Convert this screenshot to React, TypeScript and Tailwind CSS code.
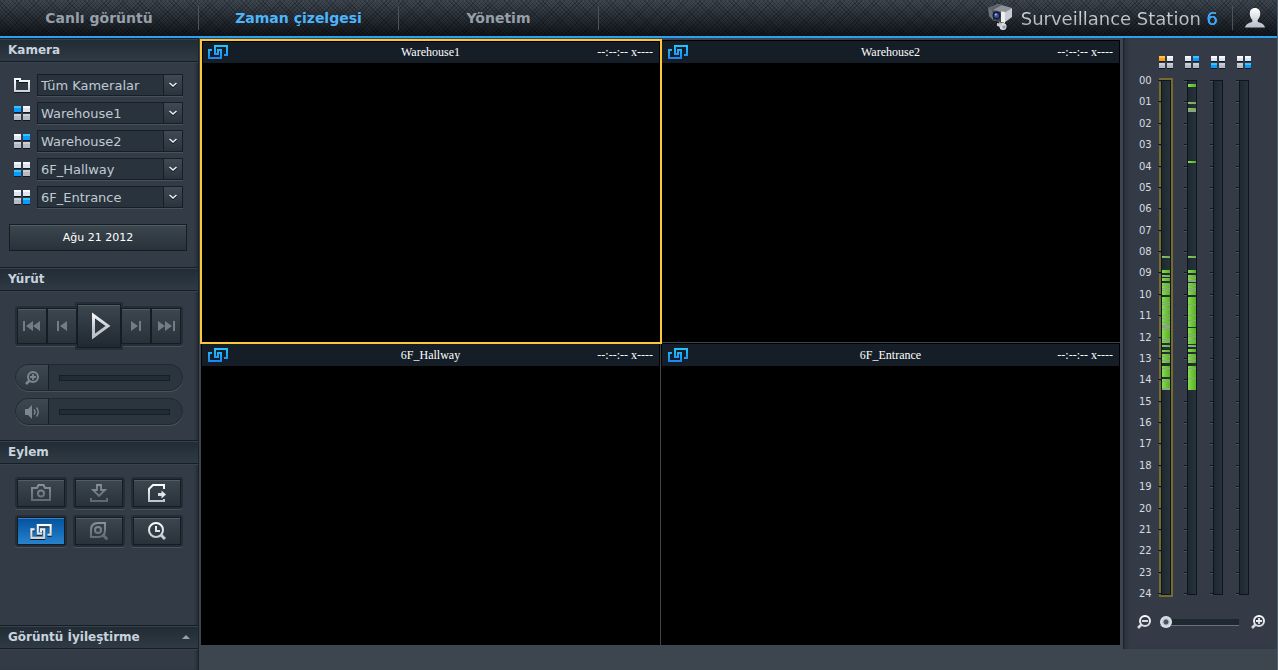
import React, { useState } from 'react';
import clsx from 'clsx';

type Corner = 'tl' | 'tr' | 'bl' | 'br';
type Tone = 'g' | 'x';
// start, length, tone: one day is DAY_LENGTH units long
type Segment = [number, number, Tone];

const DAY_LENGTH = 514;

const tabs = ['Canlı görüntü', 'Zaman çizelgesi', 'Yönetim'];

const cameras: { name: string; corner: Corner }[] = [
  { name: 'Warehouse1', corner: 'tl' },
  { name: 'Warehouse2', corner: 'tr' },
  { name: '6F_Hallway', corner: 'bl' },
  { name: '6F_Entrance', corner: 'br' },
];

const hours = Array.from({ length: 25 }, (_, i) => String(i).padStart(2, '0'));

const recordings: Segment[][] = [
  [
    [175, 1, 'g'], [176, 1, 'x'], [189, 3, 'g'], [194, 1, 'g'], [195, 1, 'x'], [197, 3, 'g'],
    [202, 12, 'g'], [204, 1, 'x'], [207, 1, 'x'], [209, 1, 'x'],
    [216, 47, 'g'], [221, 1, 'x'], [223, 1, 'x'], [228, 1, 'x'], [234, 1, 'x'], [237, 1, 'x'], [241, 1, 'x'],
    [244, 3, 'x'], [248, 1, 'x'], [259, 1, 'x'], [261, 1, 'x'],
    [265, 1, 'g'], [266, 1, 'x'], [270, 2, 'g'], [274, 9, 'g'], [276, 1, 'x'], [280, 1, 'x'],
    [286, 11, 'g'], [288, 1, 'x'], [299, 11, 'g'], [301, 1, 'x'], [308, 2, 'x'],
  ],
  [
    [3, 3, 'g'], [21, 1, 'g'], [22, 1, 'x'], [27, 1, 'g'], [28, 3, 'x'], [80, 2, 'g'],
    [175, 1, 'g'], [176, 1, 'x'], [189, 3, 'g'], [194, 7, 'g'], [196, 1, 'x'], [199, 2, 'x'],
    [202, 12, 'g'], [204, 1, 'x'], [207, 1, 'x'], [209, 1, 'x'],
    [216, 30, 'g'], [223, 1, 'x'], [234, 1, 'x'], [239, 1, 'x'],
    [247, 17, 'g'], [253, 1, 'x'], [255, 1, 'x'], [261, 1, 'x'],
    [265, 1, 'g'], [266, 1, 'x'], [269, 3, 'g'], [274, 9, 'g'], [276, 1, 'x'], [280, 1, 'x'],
    [286, 24, 'g'], [288, 1, 'x'], [298, 1, 'x'],
  ],
  [],
  [],
];

const Gradients: React.FC = () => (
  <svg className="absolute h-0 w-0" aria-hidden="true">
    <defs>
      <linearGradient id="silver" gradientUnits="userSpaceOnUse" x1="0" y1="0" x2="0" y2="18">
        <stop offset="0" stopColor="#ffffff" />
        <stop offset="1" stopColor="#bcc3cd" />
      </linearGradient>
      <linearGradient id="dim" gradientUnits="userSpaceOnUse" x1="0" y1="0" x2="0" y2="18">
        <stop offset="0" stopColor="#8a939c" />
        <stop offset="1" stopColor="#5d6670" />
      </linearGradient>
      <linearGradient id="azure" gradientUnits="userSpaceOnUse" x1="0" y1="0" x2="0" y2="14">
        <stop offset="0" stopColor="#1fc8ff" />
        <stop offset="1" stopColor="#1b84f2" />
      </linearGradient>
    </defs>
  </svg>
);

const QuadIcon: React.FC<{ corner: Corner; small?: boolean; active?: boolean }> = ({ corner, small, active }) => {
  const w = small ? 6 : 7;
  const h = small ? 5 : 6;
  const dx = small ? 8 : 9;
  const dy = small ? 7 : 8;
  const cells: [Corner, number, number][] = [
    ['tl', 0, 0],
    ['tr', dx, 0],
    ['bl', 0, dy],
    ['br', dx, dy],
  ];
  const hot = active ? '#ff9d0a' : '#0a9bff';
  const hotTop = active ? '#ffc24a' : '#35c4ff';
  return (
    <svg
      className={small ? 'h-[13px] w-[14px]' : 'h-[15px] w-4'}
      viewBox={small ? '0 0 14 13' : '0 0 16 15'}
      shapeRendering="crispEdges"
      aria-hidden="true"
    >
      {cells.map(([id, x, y]) => (
        <g key={id}>
          <rect x={x} y={y + 1} width={w} height={h} fill="#12181f" />
          <rect x={x} y={y} width={w} height={h} fill={id === corner ? hot : y ? '#b4bbc5' : '#dfe5f0'} />
          <rect x={x} y={y} width={w} height="2" fill={id === corner ? hotTop : y ? '#c9ced6' : '#f6f9ff'} />
        </g>
      ))}
    </svg>
  );
};

const LinkIcon: React.FC<{ stroke: string; className?: string }> = ({ stroke, className }) => (
  <svg className={className} viewBox="0 0 20 14" fill="none" stroke={stroke} strokeWidth="2" aria-hidden="true">
    <path d="M4 5H1v8h12V5h-3v3" />
    <path d="M16 10h3V1H7v8h4" />
  </svg>
);

const MagnifierIcon: React.FC<{ plus?: boolean; stroke: string; className?: string }> = ({ plus, stroke, className }) => (
  <svg className={className} viewBox="0 0 14 14" fill="none" stroke={stroke} strokeWidth="2" aria-hidden="true">
    <circle cx="8" cy="6" r="5" />
    <path d="M4.5 9.5L1 13" strokeWidth="2.6" />
    <path d={plus ? 'M5 6h6M8 3v6' : 'M5 6h6'} strokeWidth="1.8" />
  </svg>
);

const Logo: React.FC = () => (
  <svg className="h-7 w-7" viewBox="0 0 28 28" aria-hidden="true">
    <path d="M1 4l10-4 14 4-7 5z" fill="#8d9299" />
    <path d="M1 4l10-4 4 1-9 5z" fill="#5e646b" />
    <path d="M1 4l5 2v10l-4-4z" fill="#6b7178" />
    <path d="M17 9l8-5v9l-8 6z" fill="#c9cdd2" />
    <path d="M5 6l13 2v11L6 16z" fill="#eceef0" />
    <path d="M5 6l9 1.500v10.800L6 16z" fill="#40454d" />
    <circle cx="9.500" cy="11.500" r="4" fill="#15192b" />
    <circle cx="9.500" cy="11.500" r="2.500" fill="#3350a8" />
    <circle cx="8.800" cy="10.600" r="1" fill="#a9c0ff" />
    <path d="M12 18l5 1v3l-5-1z" fill="#a0a5ab" />
    <circle cx="16" cy="22.500" r="3.500" fill="#dde0e3" />
    <circle cx="17" cy="23" r="1.800" fill="#9ca1a8" />
    <path d="M10 19l5 1-1 3-4-1z" fill="#c9cdd2" />
  </svg>
);

const SectionTitle: React.FC<{ children: React.ReactNode }> = ({ children }) => (
  <h2 className="flex h-6 shrink-0 items-center justify-between border-y border-[#151e27] bg-linear-to-b from-[#212b34] to-[#303a44] px-2 text-[12px] font-bold text-[#c8d3de] shadow-[inset_0_1px_0_#38424c,0_1px_0_#39434d]">
    {children}
  </h2>
);

const Dropdown: React.FC<{ label: string; options: string[]; initial: string }> = ({ label, options, initial }) => {
  const [value, setValue] = useState(initial);
  return (
    <div className="relative flex-1">
      <select
        aria-label={label}
        value={value}
        onChange={(e) => setValue(e.target.value)}
        className="block h-[22px] w-full appearance-none border border-[#161f28] bg-[#29333d] pl-[3px] pr-5 pt-px text-[13px] text-[#c0c9d2] shadow-[0_1px_0_#48525b]"
      >
        {options.map((option) => (
          <option key={option}>{option}</option>
        ))}
      </select>
      <span className="pointer-events-none absolute inset-y-0 right-0 flex w-5 items-center justify-center border border-[#161f28] bg-linear-to-b from-[#404a54] to-[#2a343d]">
        <svg className="h-[6px] w-2" viewBox="0 0 8 6" fill="none" aria-hidden="true">
          <path d="M0.500 2l3.500 3 3.500-3" stroke="#10161c" strokeWidth="1.500" />
          <path d="M0.500 1l3.500 3 3.500-3" stroke="#e8eef4" strokeWidth="1.500" />
        </svg>
      </span>
    </div>
  );
};

const raised = 'border border-[#141c24] bg-linear-to-b from-[#3c464f] to-[#29323b] shadow-[inset_0_1px_0_#535d66]';

const StepButton: React.FC<{ label: string; children: React.ReactNode }> = ({ label, children }) => (
  <button aria-label={label} className={clsx(raised, 'relative z-10 flex h-9 w-[30px] items-center justify-center')}>
    <svg className="h-3 w-[18px]" viewBox="0 0 18 12" fill="#737c85" aria-hidden="true">
      {children}
    </svg>
  </button>
);

const PillSlider: React.FC<{ label: string; icon: React.ReactNode }> = ({ label, icon }) => (
  <label className="flex h-[27px] items-center overflow-hidden rounded-full border border-[#1f2830] bg-[#2b353e] shadow-[0_1px_0_#48525b]">
    <span className="flex h-full w-[33px] items-center justify-center border-r border-[#161f28] bg-linear-to-b from-[#3e4851] to-[#2d3740]">
      {icon}
    </span>
    <input
      type="range"
      aria-label={label}
      disabled
      className="ml-[10px] mr-3 h-[6px] min-w-0 flex-1 appearance-none border border-[#161f28] bg-[#222c35] [&::-webkit-slider-thumb]:appearance-none"
    />
  </label>
);

const ActionButton: React.FC<{ label: string; active?: boolean; children: React.ReactNode }> = ({ label, active, children }) => (
  <div className="rounded-[3px] bg-[#252e37] p-[2px] shadow-[0_1px_0_#48525b]">
    <button
      aria-label={label}
      className={clsx(
        'flex h-7 w-full items-center justify-center border border-[#141c24]',
        active
          ? 'bg-linear-to-b from-[#04519d] to-[#2683cc] shadow-[inset_0_1px_0_#3b7fc0]'
          : 'bg-linear-to-b from-[#3c464f] to-[#29323b] shadow-[inset_0_1px_0_#535d66]'
      )}
    >
      {children}
    </button>
  </div>
);

const VideoTile: React.FC<{ name: string; selected: boolean; onSelect: () => void }> = ({ name, selected, onSelect }) => (
  <section onClick={onSelect} className="relative border border-black bg-black">
    <header className="grid h-[22px] grid-cols-3 items-center bg-[#151e27] px-[6px] font-['Liberation_Serif',serif] text-[12px] text-white">
      <LinkIcon stroke="url(#azure)" className="h-[14px] w-5" />
      <span className="text-center">{name}</span>
      <span className="text-right">--:--:-- x----</span>
    </header>
    {selected && (
      <div className="pointer-events-none absolute -bottom-[3px] -left-[2px] -right-[3px] -top-[2px] z-10 border-2 border-[#fcc83a] shadow-[inset_0_0_0_1px_#000]" />
    )}
  </section>
);

const Track: React.FC<{ segments: Segment[]; selected: boolean }> = ({ segments, selected }) => (
  <div className={clsx('relative w-[14px] border-2', selected ? 'border-[#756b2b]' : 'border-transparent')}>
    <div className="relative h-full border border-[#0d151d] bg-linear-to-r from-[#1d2830] to-[#28323c]">
      {segments.map(([start, length, tone], i) => (
        <div
          key={i}
          className={clsx(
            'absolute inset-x-0',
            tone === 'g' ? 'bg-linear-to-r from-[#84dc4e] to-[#5aae22]' : 'bg-[#8ba486]'
          )}
          style={{ top: `${(start / DAY_LENGTH) * 100}%`, height: `${(length / DAY_LENGTH) * 100}%` }}
        />
      ))}
    </div>
    <div className="absolute inset-y-0 -left-[3px] flex flex-col justify-between">
      {hours.map((hour) => (
        <span key={hour} className="h-[2px] w-[3px] border-t border-[#0d151d] bg-[#4a545d]" />
      ))}
    </div>
  </div>
);

const App: React.FC = () => {
  const [tab, setTab] = useState('Zaman çizelgesi');
  const [selected, setSelected] = useState(0);
  const [zoom, setZoom] = useState(0);

  const cameraNames = cameras.map((camera) => camera.name);

  return (
    <div className="flex min-h-screen flex-col border-r border-[#536270] bg-[#3d464f] font-['DejaVu_Sans',Verdana,sans-serif] text-[#c0c9d2]">
      <Gradients />
      <header className="flex h-[38px] items-center border-b-2 border-[#2ba0ee] bg-[repeating-linear-gradient(45deg,rgba(0,0,0,0.22)_0_1px,transparent_1px_3px),repeating-linear-gradient(-45deg,rgba(0,0,0,0.22)_0_1px,transparent_1px_3px),linear-gradient(#414a54,#10151b)]">
        <nav className="flex flex-1">
          {tabs.map((name) => (
            <button
              key={name}
              onClick={() => setTab(name)}
              className={clsx(
                'h-6 w-[200px] border-r border-[#4b545d] text-[14px] font-bold first:w-[199px]',
                name === tab ? 'text-[#4db5fa]' : 'text-[#979fa9]'
              )}
            >
              {name}
            </button>
          ))}
        </nav>
        <Logo />
        <h1 className="ml-[6px] bg-linear-to-b from-[#e6eaee] to-[#9aa2ab] bg-clip-text text-[18px] text-transparent">
          Surveillance Station <span className="text-[#2ba6f7]">6</span>
        </h1>
        <button aria-label="Kullanıcı" className="ml-[14px] flex h-6 items-center border-l border-[#4b545d] pl-3 pr-3">
          <svg className="h-5 w-5" viewBox="0 0 20 20" fill="url(#silver)" aria-hidden="true">
            <path d="M10 0c3.400 0 5.200 2.300 5.200 5.400 0 2.800-1.200 5-2.500 6.300v2c2 1.200 6.800 1.800 7.300 5.800H0c.5-4 5.300-4.600 7.300-5.800v-2C6 10.400 4.800 8.200 4.800 5.400 4.800 2.300 6.600 0 10 0z" />
          </svg>
        </button>
      </header>

      <div className="flex flex-1">
        <aside className="flex w-[199px] shrink-0 flex-col border-r border-[#1a222a] bg-[#333c46] shadow-[inset_-3px_0_3px_-1px_#252e37]">
          <SectionTitle>Kamera</SectionTitle>
          <div className="pb-4 pl-[9px] pr-[11px] pt-3">
            <div className="flex flex-col gap-[6px] pl-[5px] pr-1">
              <div className="flex items-center gap-[7px]">
                <svg className="h-[15px] w-4" viewBox="0 0 16 15" fill="none" aria-hidden="true">
                  <path d="M1 14V2h5v2h9v10z" stroke="#10161c" strokeWidth="2" />
                  <path d="M1 13V1h5v2h9v10z" stroke="url(#silver)" strokeWidth="2" />
                </svg>
                <Dropdown label="Kamera grubu" options={['Tüm Kameralar']} initial="Tüm Kameralar" />
              </div>
              {cameras.map(({ name, corner }) => (
                <div key={name} className="flex items-center gap-[7px]">
                  <QuadIcon corner={corner} />
                  <Dropdown label={`Kamera ${name}`} options={cameraNames} initial={name} />
                </div>
              ))}
            </div>
            <button className={clsx(raised, 'mt-4 block h-[27px] w-full pt-px text-[11px] text-white')}>Ağu 21 2012</button>
          </div>

          <SectionTitle>Yürüt</SectionTitle>
          <div className="px-[15px] py-[15px]">
            <div className="flex h-10 items-center justify-center rounded-[3px] bg-[#252e37] shadow-[0_1px_0_#48525b]">
              <StepButton label="İlk kayıt">
                <path d="M0 1h2v10H0zM10 1v10L3 6zM17 1v10l-7-5z" />
              </StepButton>
              <StepButton label="Önceki kayıt">
                <path d="M4 1h2v10H4zM14 1v10L7 6z" />
              </StepButton>
              <button
                aria-label="Oynat"
                className="flex h-11 w-11 items-center justify-center border border-[#141c24] bg-linear-to-b from-[#3c464f] to-[#202931] shadow-[inset_0_1px_0_#535d66,0_0_0_2px_#252e37]"
              >
                <svg className="ml-1 h-7 w-5" viewBox="0 0 20 28" fill="none" aria-hidden="true">
                  <path d="M2.500 4v21l14.500-10.500z" stroke="#10161c" strokeWidth="3" />
                  <path d="M2.500 3.500v21L17 14z" stroke="url(#silver)" strokeWidth="3" />
                </svg>
              </button>
              <StepButton label="Sonraki kayıt">
                <path d="M12 1h2v10h-2zM4 1v10l7-5z" />
              </StepButton>
              <StepButton label="Son kayıt">
                <path d="M16 1h2v10h-2zM8 1v10l7-5zM1 1v10l7-5z" />
              </StepButton>
            </div>
            <div className="mt-[18px] flex flex-col gap-[7px]">
              <PillSlider label="Yakınlaştırma" icon={<MagnifierIcon plus stroke="#7d868f" className="h-[14px] w-[14px]" />} />
              <PillSlider
                label="Ses"
                icon={
                  <svg className="h-[14px] w-4" viewBox="0 0 16 14" fill="#7d868f" aria-hidden="true">
                    <path d="M1 4h3l4-4v14l-4-4H1z" />
                    <path d="M10 4.500q2 2.500 0 5M12.500 2.500q3.500 4.500 0 9" fill="none" stroke="#7d868f" strokeWidth="1.400" />
                  </svg>
                }
              />
            </div>
          </div>

          <SectionTitle>Eylem</SectionTitle>
          <div className="grid flex-1 grid-cols-3 content-start gap-[6px] px-[15px] pt-[13px]">
            <ActionButton label="Anlık görüntü">
              <svg className="h-[18px] w-5" viewBox="0 0 20 18" fill="none" stroke="url(#dim)" strokeWidth="2" aria-hidden="true">
                <path d="M1 4h5l1.500-3h5L14 4h5v12H1z" />
                <circle cx="10" cy="9.500" r="3" />
              </svg>
            </ActionButton>
            <ActionButton label="İndir">
              <svg className="h-[18px] w-[18px]" viewBox="0 0 18 18" fill="none" stroke="url(#dim)" strokeWidth="2" aria-hidden="true">
                <path d="M7 1h4v5h4l-6 6-6-6h4z" strokeWidth="1.800" />
                <path d="M1 14v3h16v-3" />
              </svg>
            </ActionButton>
            <ActionButton label="Dışa aktar">
              <svg className="h-[18px] w-[18px]" viewBox="0 0 18 18" fill="none" stroke="url(#silver)" strokeWidth="2" aria-hidden="true">
                <path d="M16 5V1H5L1 5v12h15v-2" />
                <path d="M10 10.500h4" strokeWidth="3" />
                <path d="M13.500 6.500l4.500 4-4.500 4z" fill="#e4e8ee" stroke="none" />
              </svg>
            </ActionButton>
            <ActionButton label="Eşzamanlı oynat" active>
              <LinkIcon stroke="url(#silver)" className="h-[15px] w-[22px] drop-shadow-[0_1px_0_#10161c]" />
            </ActionButton>
            <ActionButton label="Akıllı arama">
              <svg className="h-[18px] w-[18px]" viewBox="0 0 18 18" fill="none" stroke="url(#dim)" strokeWidth="2" aria-hidden="true">
                <path d="M1 15V8q0-7 7-7h7v7q0 7-7 7z" />
                <circle cx="8" cy="8" r="3" />
                <path d="M12.500 12.500l5 5" strokeWidth="3" />
              </svg>
            </ActionButton>
            <ActionButton label="Zamana göre ara">
              <svg className="h-[18px] w-[18px]" viewBox="0 0 18 18" fill="none" stroke="url(#silver)" strokeWidth="2" aria-hidden="true">
                <circle cx="8" cy="8" r="7" />
                <path d="M8 4v5h4" />
                <path d="M13 13l4 4" strokeWidth="3" />
              </svg>
            </ActionButton>
          </div>

          <SectionTitle>
            Görüntü İyileştirme
            <svg className="h-1 w-2" viewBox="0 0 8 4" fill="#98a1aa" aria-hidden="true">
              <path d="M0 4l4-4 4 4z" />
            </svg>
          </SectionTitle>
          <div className="h-[21px]" />
        </aside>

        <main className="grid flex-1 grid-cols-2 grid-rows-2 gap-px pb-[25px] pl-[2px] pr-[3px] pt-[2px]">
          {cameras.map(({ name }, i) => (
            <VideoTile key={name} name={name} selected={i === selected} onSelect={() => setSelected(i)} />
          ))}
        </main>

        <aside className="mb-[21px] flex w-[154px] shrink-0 flex-col border-l border-[#1a222a] bg-[#343b46] pb-5 pl-[13px] pr-3 pt-[18px] shadow-[inset_4px_0_4px_-2px_#272f38]">
          <div className="flex gap-3 pl-[22px]">
            {cameras.map(({ name, corner }, i) => (
              <QuadIcon key={name} corner={corner} small active={i === selected} />
            ))}
          </div>
          <div className="mt-[5px] flex flex-1 gap-[7px] pl-[2px]">
            <div className="flex flex-col justify-between text-[10px] leading-[14px] text-[#d5dbe2]">
              {hours.map((hour) => (
                <span key={hour}>{hour}</span>
              ))}
            </div>
            <div className="my-1 flex gap-3">
              {recordings.map((segments, i) => (
                <Track key={i} segments={segments} selected={i === selected} />
              ))}
            </div>
          </div>
          <div className="mt-[14px] flex items-center">
            <button aria-label="Uzaklaştır">
              <MagnifierIcon stroke="url(#silver)" className="h-[14px] w-[14px]" />
            </button>
            <input
              type="range"
              aria-label="Zaman ölçeği"
              min={0}
              max={100}
              value={zoom}
              onChange={(e) => setZoom(Number(e.target.value))}
              className="ml-[9px] mr-3 h-[7px] min-w-0 flex-1 appearance-none border-b border-[#6a737c] bg-[#1e2831] [&::-webkit-slider-thumb]:h-3 [&::-webkit-slider-thumb]:w-3 [&::-webkit-slider-thumb]:appearance-none [&::-webkit-slider-thumb]:rounded-full [&::-webkit-slider-thumb]:bg-[radial-gradient(circle,#4a525c_0_2px,#c3c9d2_3px,#e6eaf0_6px)]"
            />
            <button aria-label="Yakınlaştır">
              <MagnifierIcon plus stroke="url(#silver)" className="h-[14px] w-[14px]" />
            </button>
          </div>
        </aside>
      </div>
    </div>
  );
};

export default App;
